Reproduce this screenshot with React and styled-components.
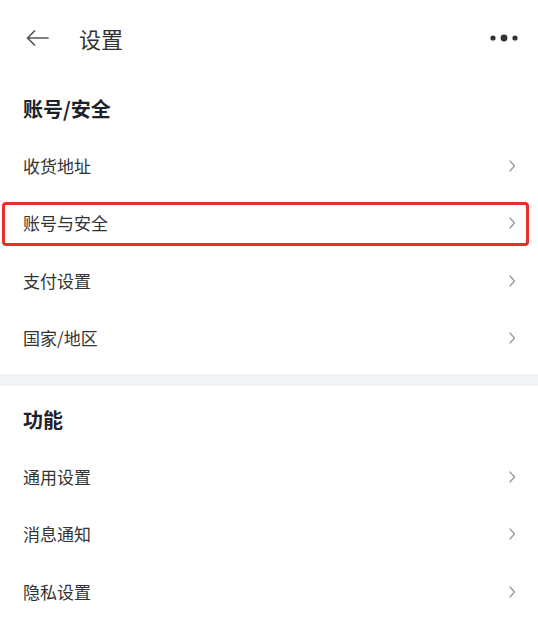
import styled, { createGlobalStyle } from "styled-components";

const GlobalStyle = createGlobalStyle`
  html, body {
    margin: 0;
    padding: 0;
    background: #ffffff;
  }
  body {
    font-family: "Noto Sans CJK SC", "Noto Sans", sans-serif;
  }
`;

const Page = styled.div`
  width: 538px;
  min-height: 621px;
  background: #ffffff;
  display: flex;
  flex-direction: column;
`;

const Header = styled.header`
  height: 75px;
  display: flex;
  align-items: center;
  padding: 0 18px 0 26px;
`;

const BackButton = styled.button`
  background: none;
  border: none;
  padding: 0;
  width: 24px;
  height: 24px;
  display: flex;
  align-items: center;
  cursor: pointer;
`;

const HeaderTitle = styled.h1`
  margin: 0 0 0 29px;
  flex: 1;
  font-size: 22px;
  font-weight: 400;
  color: #333333;
  line-height: 30px;
`;

const MoreButton = styled.button`
  background: none;
  border: none;
  padding: 0;
  width: 32px;
  height: 20px;
  display: flex;
  align-items: center;
  cursor: pointer;
`;

const Section = styled.section`
  display: flex;
  flex-direction: column;
  padding-bottom: ${(p) => (p.$last ? "0" : "7px")};
`;

const SectionTitle = styled.h2`
  margin: 0;
  padding: 20px 23px 14px;
  font-size: 20px;
  font-weight: 700;
  line-height: 28px;
  color: #1d2129;
`;

const Row = styled.div`
  position: relative;
  height: 57.5px;
  display: flex;
  align-items: center;
  justify-content: space-between;
  padding: 0 22px 0 23px;
  cursor: pointer;

  ${(p) =>
    p.$highlighted &&
    `
    &::after {
      content: "";
      position: absolute;
      left: 2px;
      right: 9px;
      top: 7px;
      bottom: 6px;
      border: 3px solid #e8302b;
      border-radius: 4px;
      pointer-events: none;
    }
  `}
`;

const RowLabel = styled.span`
  font-size: 17px;
  color: #333333;
  line-height: 24px;
`;

const Band = styled.div`
  height: 12px;
  background: #f2f4f7;
`;

const BackIcon = () => (
  <svg width="23" height="16" viewBox="0 0 23 16" fill="none">
    <path d="M22 8H1.5M8.5 1L1.5 8L8.5 15" stroke="#555555" strokeWidth="1.7" strokeLinecap="round" strokeLinejoin="round" />
  </svg>
);

const MoreIcon = () => (
  <svg width="32" height="12" viewBox="0 0 32 12">
    <circle cx="5" cy="6" r="2.6" fill="#333333" />
    <circle cx="16" cy="6" r="3.4" fill="#333333" />
    <circle cx="27" cy="6" r="2.6" fill="#333333" />
  </svg>
);

const Chevron = () => (
  <svg width="8" height="14" viewBox="0 0 8 14" fill="none">
    <path d="M2 2L6.5 7L2 12" stroke="#999999" strokeWidth="1.3" strokeLinecap="round" strokeLinejoin="round" />
  </svg>
);

const sections = [
  {
    title: "账号/安全",
    items: ["收货地址", "账号与安全", "支付设置", "国家/地区"],
  },
  {
    title: "功能",
    items: ["通用设置", "消息通知", "隐私设置"],
  },
];

const App = () => {
  return (
    <Page>
      <GlobalStyle />
      <Header>
        <BackButton aria-label="返回">
          <BackIcon />
        </BackButton>
        <HeaderTitle>设置</HeaderTitle>
        <MoreButton aria-label="更多">
          <MoreIcon />
        </MoreButton>
      </Header>

      {sections.map((section, i) => (
        <div key={section.title}>
          {i > 0 && <Band />}
          <Section $last={i === sections.length - 1}>
            <SectionTitle>{section.title}</SectionTitle>
            {section.items.map((item) => (
              <Row key={item} $highlighted={item === "账号与安全"}>
                <RowLabel>{item}</RowLabel>
                <Chevron />
              </Row>
            ))}
          </Section>
        </div>
      ))}
    </Page>
  );
};

export default App;
